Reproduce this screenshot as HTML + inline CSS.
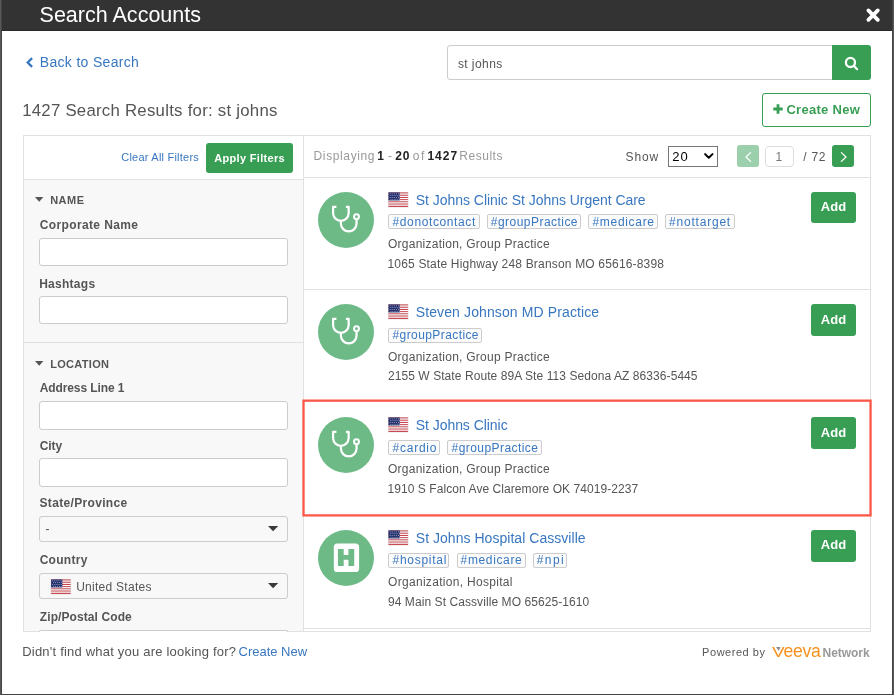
<!DOCTYPE html>
<html lang="en">
<head>
<meta charset="utf-8">
<title>Search Accounts</title>
<style>
html,body{margin:0;padding:0;}
body{width:894px;height:695px;overflow:hidden;background:#585858;font-family:"Liberation Sans",sans-serif;position:relative;}
.abs,.t,.tag,.inp,.sel,.btn,.line{position:absolute;box-sizing:border-box;}
.t{white-space:nowrap;display:block;}
#wrap{position:absolute;left:0;top:0;width:894px;height:695px;will-change:transform;}
#modal{position:absolute;left:2px;top:0;width:890px;height:694px;background:#fff;box-shadow:0 0 0 1px #444;}
#hdr{position:absolute;left:2px;top:0;width:890px;height:31px;background:#333;box-sizing:border-box;border-bottom:1px solid #2a2a2a;}
.inp{background:#fff;border:1px solid #ccc;border-radius:3px;}
.sel{background:#f8f8f8;border:1px solid #ccc;border-radius:3px;}
.btn{background:#389e54;border-radius:3px;}
.tag{height:15px;border:1px solid #ccc;border-radius:2px;background:#fbfbfb;}
.line{background:#e1e1e1;}
.circ{position:absolute;width:56px;height:56px;border-radius:50%;background:#6eba87;}
svg{position:absolute;overflow:visible;}
</style>
</head>
<body>
<div id="wrap">
<div id="modal"></div>
<div id="hdr"></div>
<!-- close icon -->
<svg style="left:866px;top:8px" width="14" height="14" viewBox="0 0 14 14"><path d="M2.4 2.4 L11.8 11.8 M11.8 2.4 L2.4 11.8" stroke="#fff" stroke-width="3.8" stroke-linecap="round" fill="none"/></svg>
<!-- back chevron -->
<svg style="left:26px;top:57px" width="7" height="11" viewBox="0 0 7 11"><path d="M5.3 1.9 L1.7 5.5 L5.3 9.1" stroke="#3877c0" stroke-width="2.3" fill="none" stroke-linecap="square" stroke-linejoin="miter"/></svg>

<!-- search input + button -->
<div class="inp" style="left:447px;top:45px;width:386px;height:35px;border-radius:3px 0 0 3px;"></div>
<div class="btn" style="left:832px;top:45px;width:39px;height:35px;border-radius:0 3px 3px 0;"></div>
<svg style="left:844px;top:56px" width="15" height="15" viewBox="0 0 15 15"><circle cx="6.45" cy="6.45" r="4.55" stroke="#fff" stroke-width="2.3" fill="none"/><path d="M9.8 9.8 L13.1 13.2" stroke="#fff" stroke-width="2.2" stroke-linecap="round"/></svg>

<!-- create new -->
<div class="abs" style="left:762px;top:93px;width:109px;height:34px;border:1px solid #389e54;border-radius:3px;background:#fff;"></div>
<svg style="left:773px;top:104px" width="10" height="10" viewBox="0 0 10 10"><path d="M5 0.3 V9.7 M0.3 5 H9.7" stroke="#389e54" stroke-width="2.8"/></svg>

<!-- main panel -->
<div class="abs" style="left:23px;top:135px;width:848px;height:497px;border:1px solid #e1e1e1;background:#fff;"></div>
<!-- filter panel bg -->
<div class="abs" style="left:24px;top:180px;width:279px;height:451px;background:#f8f8f8;"></div>
<div class="line" style="left:24px;top:179px;width:279px;height:1px;"></div>
<div class="line" style="left:303px;top:136px;width:1px;height:495px;"></div>
<div class="line" style="left:304px;top:177px;width:566px;height:1px;"></div>
<div class="line" style="left:24px;top:342px;width:279px;height:1px;"></div>
<!-- row separators -->
<div class="line" style="left:304px;top:289px;width:566px;height:1px;"></div>
<div class="line" style="left:304px;top:628px;width:566px;height:1px;"></div>
<!-- selected row red outline -->
<svg style="left:0;top:0" width="894" height="695" viewBox="0 0 894 695"><rect x="303.5" y="400.65" width="567.05" height="114.75" fill="none" stroke="#fd5748" stroke-width="2.3"/></svg>

<!-- apply filters btn -->
<div class="btn" style="left:206px;top:143px;width:87px;height:30px;"></div>

<!-- pagination -->
<div class="abs" style="left:668px;top:146px;width:50px;height:21px;border:1px solid #767676;background:#fff;"></div>
<svg style="left:704.2px;top:153.2px" width="9.6" height="6" viewBox="0 0 9.6 6"><path d="M1.1 1.1 L4.8 4.7 L8.5 1.1" stroke="#000" stroke-width="2" fill="none" stroke-linecap="round" stroke-linejoin="round"/></svg>
<div class="btn" style="left:737px;top:145px;width:22px;height:22px;background:#9ccfab;"></div>
<svg style="left:744.6px;top:151.5px" width="7" height="10" viewBox="0 0 7 10"><path d="M5.6 0.6 L1 5 L5.6 9.4" stroke="#fff" stroke-width="1.3" fill="none" stroke-linecap="round" stroke-linejoin="round"/></svg>
<div class="inp" style="left:765px;top:146px;width:29px;height:21px;border-color:#ddd;border-radius:4px;"></div>
<div class="btn" style="left:832px;top:145px;width:22px;height:22px;"></div>
<svg style="left:839.8px;top:151.5px" width="7" height="10" viewBox="0 0 7 10"><path d="M1.4 0.6 L6 5 L1.4 9.4" stroke="#fff" stroke-width="1.3" fill="none" stroke-linecap="round" stroke-linejoin="round"/></svg>

<!-- filter section carets -->
<svg style="left:34.8px;top:196.8px" width="8.4" height="5" viewBox="0 0 8.4 5"><path d="M0 0 H8.4 L4.2 4.7 Z" fill="#555"/></svg>
<svg style="left:34.8px;top:360.8px" width="8.4" height="5" viewBox="0 0 8.4 5"><path d="M0 0 H8.4 L4.2 4.7 Z" fill="#555"/></svg>

<!-- filter inputs -->
<div class="inp" style="left:39px;top:238px;width:249px;height:28px;"></div>
<div class="inp" style="left:39px;top:296px;width:249px;height:28px;"></div>
<div class="inp" style="left:39px;top:401px;width:249px;height:29px;"></div>
<div class="inp" style="left:39px;top:458px;width:249px;height:29px;"></div>
<div class="sel" style="left:39px;top:516px;width:249px;height:26px;"></div>
<div class="sel" style="left:39px;top:573px;width:249px;height:26px;"></div>
<div class="inp" style="left:39px;top:630px;width:249px;height:2px;border-bottom:0;border-radius:3px 3px 0 0;"></div>
<svg style="left:267.5px;top:526px" width="11" height="6" viewBox="0 0 11 6"><path d="M0 0 H10.2 L5.1 5.2 Z" fill="#3a3a3a"/></svg>
<svg style="left:267.5px;top:583.2px" width="11" height="6" viewBox="0 0 11 6"><path d="M0 0 H10.2 L5.1 5.2 Z" fill="#3a3a3a"/></svg>

<div class="tag" style="left:388.4px;top:214px;width:91.3px"></div>
<div class="tag" style="left:486.7px;top:214px;width:94.6px"></div>
<div class="tag" style="left:588.4px;top:214px;width:69.5px"></div>
<div class="tag" style="left:665.0px;top:214px;width:69.5px"></div>
<div class="tag" style="left:388.4px;top:328px;width:93.9px"></div>
<div class="tag" style="left:388.4px;top:440px;width:52.0px"></div>
<div class="tag" style="left:447.4px;top:440px;width:94.3px"></div>
<div class="tag" style="left:388.4px;top:553px;width:61.1px"></div>
<div class="tag" style="left:456.5px;top:553px;width:69.1px"></div>
<div class="tag" style="left:532.7px;top:553px;width:34.5px"></div>
<div class="circ" style="left:318px;top:192.0px"></div>
<svg style="left:318px;top:192.0px" width="56" height="56" viewBox="318 192 56 56"><g fill="none" stroke="#fff" stroke-width="2.2" stroke-linejoin="round"><path d="M336.4 206.9 H333.1 V213.3 A7.78 7.8 0 0 0 348.65 213.3 V206.9 H345.9"/><path d="M340.9 221.1 V223.6 A7.83 7.83 0 0 0 356.56 223.6 V219.4"/><circle cx="356.5" cy="216.75" r="2.45" stroke-width="2"/></g></svg>
<svg style="left:388.20px;top:192.25px" width="20.4" height="15.4" viewBox="0 0 20.4 15.4"><rect x="0" y="0" width="20.4" height="15.4" fill="#dcdcd8"/><rect x="0.5" y="0.50" width="19.4" height="1.16" fill="#c22f3c"/><rect x="0.5" y="1.61" width="19.4" height="1.16" fill="#fff"/><rect x="0.5" y="2.72" width="19.4" height="1.16" fill="#c22f3c"/><rect x="0.5" y="3.82" width="19.4" height="1.16" fill="#fff"/><rect x="0.5" y="4.93" width="19.4" height="1.16" fill="#c22f3c"/><rect x="0.5" y="6.04" width="19.4" height="1.16" fill="#fff"/><rect x="0.5" y="7.15" width="19.4" height="1.16" fill="#c22f3c"/><rect x="0.5" y="8.25" width="19.4" height="1.16" fill="#fff"/><rect x="0.5" y="9.36" width="19.4" height="1.16" fill="#c22f3c"/><rect x="0.5" y="10.47" width="19.4" height="1.16" fill="#fff"/><rect x="0.5" y="11.58" width="19.4" height="1.16" fill="#c22f3c"/><rect x="0.5" y="12.68" width="19.4" height="1.16" fill="#fff"/><rect x="0.5" y="13.79" width="19.4" height="1.16" fill="#c22f3c"/><rect x="0.5" y="0.5" width="19.4" height="14.4" fill="#fff" opacity="0.10"/><rect x="0.5" y="0.5" width="11.2" height="7.9" fill="#1f2d6b"/><rect x="1.6" y="1.5" width="0.9" height="0.8" fill="#c9cde0"/><rect x="3.7" y="1.5" width="0.9" height="0.8" fill="#c9cde0"/><rect x="5.8" y="1.5" width="0.9" height="0.8" fill="#c9cde0"/><rect x="7.9" y="1.5" width="0.9" height="0.8" fill="#c9cde0"/><rect x="10.0" y="1.5" width="0.9" height="0.8" fill="#c9cde0"/><rect x="2.4" y="3.3" width="0.9" height="0.8" fill="#c9cde0"/><rect x="4.5" y="3.3" width="0.9" height="0.8" fill="#c9cde0"/><rect x="6.6" y="3.3" width="0.9" height="0.8" fill="#c9cde0"/><rect x="8.7" y="3.3" width="0.9" height="0.8" fill="#c9cde0"/><rect x="10.8" y="3.3" width="0.9" height="0.8" fill="#c9cde0"/><rect x="1.6" y="5.1" width="0.9" height="0.8" fill="#c9cde0"/><rect x="3.7" y="5.1" width="0.9" height="0.8" fill="#c9cde0"/><rect x="5.8" y="5.1" width="0.9" height="0.8" fill="#c9cde0"/><rect x="7.9" y="5.1" width="0.9" height="0.8" fill="#c9cde0"/><rect x="10.0" y="5.1" width="0.9" height="0.8" fill="#c9cde0"/><rect x="2.4" y="6.9" width="0.9" height="0.8" fill="#c9cde0"/><rect x="4.5" y="6.9" width="0.9" height="0.8" fill="#c9cde0"/><rect x="6.6" y="6.9" width="0.9" height="0.8" fill="#c9cde0"/><rect x="8.7" y="6.9" width="0.9" height="0.8" fill="#c9cde0"/><rect x="10.8" y="6.9" width="0.9" height="0.8" fill="#c9cde0"/></svg>
<div class="btn" style="left:811px;top:192px;width:45px;height:31px"></div>
<div class="circ" style="left:318px;top:304.0px"></div>
<svg style="left:318px;top:304.0px" width="56" height="56" viewBox="318 192 56 56"><g fill="none" stroke="#fff" stroke-width="2.2" stroke-linejoin="round"><path d="M336.4 206.9 H333.1 V213.3 A7.78 7.8 0 0 0 348.65 213.3 V206.9 H345.9"/><path d="M340.9 221.1 V223.6 A7.83 7.83 0 0 0 356.56 223.6 V219.4"/><circle cx="356.5" cy="216.75" r="2.45" stroke-width="2"/></g></svg>
<svg style="left:388.20px;top:304.25px" width="20.4" height="15.4" viewBox="0 0 20.4 15.4"><rect x="0" y="0" width="20.4" height="15.4" fill="#dcdcd8"/><rect x="0.5" y="0.50" width="19.4" height="1.16" fill="#c22f3c"/><rect x="0.5" y="1.61" width="19.4" height="1.16" fill="#fff"/><rect x="0.5" y="2.72" width="19.4" height="1.16" fill="#c22f3c"/><rect x="0.5" y="3.82" width="19.4" height="1.16" fill="#fff"/><rect x="0.5" y="4.93" width="19.4" height="1.16" fill="#c22f3c"/><rect x="0.5" y="6.04" width="19.4" height="1.16" fill="#fff"/><rect x="0.5" y="7.15" width="19.4" height="1.16" fill="#c22f3c"/><rect x="0.5" y="8.25" width="19.4" height="1.16" fill="#fff"/><rect x="0.5" y="9.36" width="19.4" height="1.16" fill="#c22f3c"/><rect x="0.5" y="10.47" width="19.4" height="1.16" fill="#fff"/><rect x="0.5" y="11.58" width="19.4" height="1.16" fill="#c22f3c"/><rect x="0.5" y="12.68" width="19.4" height="1.16" fill="#fff"/><rect x="0.5" y="13.79" width="19.4" height="1.16" fill="#c22f3c"/><rect x="0.5" y="0.5" width="19.4" height="14.4" fill="#fff" opacity="0.10"/><rect x="0.5" y="0.5" width="11.2" height="7.9" fill="#1f2d6b"/><rect x="1.6" y="1.5" width="0.9" height="0.8" fill="#c9cde0"/><rect x="3.7" y="1.5" width="0.9" height="0.8" fill="#c9cde0"/><rect x="5.8" y="1.5" width="0.9" height="0.8" fill="#c9cde0"/><rect x="7.9" y="1.5" width="0.9" height="0.8" fill="#c9cde0"/><rect x="10.0" y="1.5" width="0.9" height="0.8" fill="#c9cde0"/><rect x="2.4" y="3.3" width="0.9" height="0.8" fill="#c9cde0"/><rect x="4.5" y="3.3" width="0.9" height="0.8" fill="#c9cde0"/><rect x="6.6" y="3.3" width="0.9" height="0.8" fill="#c9cde0"/><rect x="8.7" y="3.3" width="0.9" height="0.8" fill="#c9cde0"/><rect x="10.8" y="3.3" width="0.9" height="0.8" fill="#c9cde0"/><rect x="1.6" y="5.1" width="0.9" height="0.8" fill="#c9cde0"/><rect x="3.7" y="5.1" width="0.9" height="0.8" fill="#c9cde0"/><rect x="5.8" y="5.1" width="0.9" height="0.8" fill="#c9cde0"/><rect x="7.9" y="5.1" width="0.9" height="0.8" fill="#c9cde0"/><rect x="10.0" y="5.1" width="0.9" height="0.8" fill="#c9cde0"/><rect x="2.4" y="6.9" width="0.9" height="0.8" fill="#c9cde0"/><rect x="4.5" y="6.9" width="0.9" height="0.8" fill="#c9cde0"/><rect x="6.6" y="6.9" width="0.9" height="0.8" fill="#c9cde0"/><rect x="8.7" y="6.9" width="0.9" height="0.8" fill="#c9cde0"/><rect x="10.8" y="6.9" width="0.9" height="0.8" fill="#c9cde0"/></svg>
<div class="btn" style="left:811px;top:304px;width:45px;height:32px"></div>
<div class="circ" style="left:318px;top:417.0px"></div>
<svg style="left:318px;top:417.0px" width="56" height="56" viewBox="318 192 56 56"><g fill="none" stroke="#fff" stroke-width="2.2" stroke-linejoin="round"><path d="M336.4 206.9 H333.1 V213.3 A7.78 7.8 0 0 0 348.65 213.3 V206.9 H345.9"/><path d="M340.9 221.1 V223.6 A7.83 7.83 0 0 0 356.56 223.6 V219.4"/><circle cx="356.5" cy="216.75" r="2.45" stroke-width="2"/></g></svg>
<svg style="left:388.20px;top:417.25px" width="20.4" height="15.4" viewBox="0 0 20.4 15.4"><rect x="0" y="0" width="20.4" height="15.4" fill="#dcdcd8"/><rect x="0.5" y="0.50" width="19.4" height="1.16" fill="#c22f3c"/><rect x="0.5" y="1.61" width="19.4" height="1.16" fill="#fff"/><rect x="0.5" y="2.72" width="19.4" height="1.16" fill="#c22f3c"/><rect x="0.5" y="3.82" width="19.4" height="1.16" fill="#fff"/><rect x="0.5" y="4.93" width="19.4" height="1.16" fill="#c22f3c"/><rect x="0.5" y="6.04" width="19.4" height="1.16" fill="#fff"/><rect x="0.5" y="7.15" width="19.4" height="1.16" fill="#c22f3c"/><rect x="0.5" y="8.25" width="19.4" height="1.16" fill="#fff"/><rect x="0.5" y="9.36" width="19.4" height="1.16" fill="#c22f3c"/><rect x="0.5" y="10.47" width="19.4" height="1.16" fill="#fff"/><rect x="0.5" y="11.58" width="19.4" height="1.16" fill="#c22f3c"/><rect x="0.5" y="12.68" width="19.4" height="1.16" fill="#fff"/><rect x="0.5" y="13.79" width="19.4" height="1.16" fill="#c22f3c"/><rect x="0.5" y="0.5" width="19.4" height="14.4" fill="#fff" opacity="0.10"/><rect x="0.5" y="0.5" width="11.2" height="7.9" fill="#1f2d6b"/><rect x="1.6" y="1.5" width="0.9" height="0.8" fill="#c9cde0"/><rect x="3.7" y="1.5" width="0.9" height="0.8" fill="#c9cde0"/><rect x="5.8" y="1.5" width="0.9" height="0.8" fill="#c9cde0"/><rect x="7.9" y="1.5" width="0.9" height="0.8" fill="#c9cde0"/><rect x="10.0" y="1.5" width="0.9" height="0.8" fill="#c9cde0"/><rect x="2.4" y="3.3" width="0.9" height="0.8" fill="#c9cde0"/><rect x="4.5" y="3.3" width="0.9" height="0.8" fill="#c9cde0"/><rect x="6.6" y="3.3" width="0.9" height="0.8" fill="#c9cde0"/><rect x="8.7" y="3.3" width="0.9" height="0.8" fill="#c9cde0"/><rect x="10.8" y="3.3" width="0.9" height="0.8" fill="#c9cde0"/><rect x="1.6" y="5.1" width="0.9" height="0.8" fill="#c9cde0"/><rect x="3.7" y="5.1" width="0.9" height="0.8" fill="#c9cde0"/><rect x="5.8" y="5.1" width="0.9" height="0.8" fill="#c9cde0"/><rect x="7.9" y="5.1" width="0.9" height="0.8" fill="#c9cde0"/><rect x="10.0" y="5.1" width="0.9" height="0.8" fill="#c9cde0"/><rect x="2.4" y="6.9" width="0.9" height="0.8" fill="#c9cde0"/><rect x="4.5" y="6.9" width="0.9" height="0.8" fill="#c9cde0"/><rect x="6.6" y="6.9" width="0.9" height="0.8" fill="#c9cde0"/><rect x="8.7" y="6.9" width="0.9" height="0.8" fill="#c9cde0"/><rect x="10.8" y="6.9" width="0.9" height="0.8" fill="#c9cde0"/></svg>
<div class="btn" style="left:811px;top:417px;width:45px;height:32px"></div>
<div class="circ" style="left:318px;top:530.0px"></div>
<svg style="left:0;top:0" width="894" height="695" viewBox="0 0 894 695"><rect x="333.8" y="543.6" width="25.3" height="28.4" rx="3.6" fill="#fff"/></svg>
<span class="t" style="left:326.25px;top:539.5px;width:40px;height:36px;line-height:36px;text-align:center;font-size:22.6px;font-weight:700;color:#6eba87;-webkit-text-stroke:2.2px #6eba87;transform:scaleX(1.05);transform-origin:50% 50%">H</span>
<svg style="left:388.20px;top:530.25px" width="20.4" height="15.4" viewBox="0 0 20.4 15.4"><rect x="0" y="0" width="20.4" height="15.4" fill="#dcdcd8"/><rect x="0.5" y="0.50" width="19.4" height="1.16" fill="#c22f3c"/><rect x="0.5" y="1.61" width="19.4" height="1.16" fill="#fff"/><rect x="0.5" y="2.72" width="19.4" height="1.16" fill="#c22f3c"/><rect x="0.5" y="3.82" width="19.4" height="1.16" fill="#fff"/><rect x="0.5" y="4.93" width="19.4" height="1.16" fill="#c22f3c"/><rect x="0.5" y="6.04" width="19.4" height="1.16" fill="#fff"/><rect x="0.5" y="7.15" width="19.4" height="1.16" fill="#c22f3c"/><rect x="0.5" y="8.25" width="19.4" height="1.16" fill="#fff"/><rect x="0.5" y="9.36" width="19.4" height="1.16" fill="#c22f3c"/><rect x="0.5" y="10.47" width="19.4" height="1.16" fill="#fff"/><rect x="0.5" y="11.58" width="19.4" height="1.16" fill="#c22f3c"/><rect x="0.5" y="12.68" width="19.4" height="1.16" fill="#fff"/><rect x="0.5" y="13.79" width="19.4" height="1.16" fill="#c22f3c"/><rect x="0.5" y="0.5" width="19.4" height="14.4" fill="#fff" opacity="0.10"/><rect x="0.5" y="0.5" width="11.2" height="7.9" fill="#1f2d6b"/><rect x="1.6" y="1.5" width="0.9" height="0.8" fill="#c9cde0"/><rect x="3.7" y="1.5" width="0.9" height="0.8" fill="#c9cde0"/><rect x="5.8" y="1.5" width="0.9" height="0.8" fill="#c9cde0"/><rect x="7.9" y="1.5" width="0.9" height="0.8" fill="#c9cde0"/><rect x="10.0" y="1.5" width="0.9" height="0.8" fill="#c9cde0"/><rect x="2.4" y="3.3" width="0.9" height="0.8" fill="#c9cde0"/><rect x="4.5" y="3.3" width="0.9" height="0.8" fill="#c9cde0"/><rect x="6.6" y="3.3" width="0.9" height="0.8" fill="#c9cde0"/><rect x="8.7" y="3.3" width="0.9" height="0.8" fill="#c9cde0"/><rect x="10.8" y="3.3" width="0.9" height="0.8" fill="#c9cde0"/><rect x="1.6" y="5.1" width="0.9" height="0.8" fill="#c9cde0"/><rect x="3.7" y="5.1" width="0.9" height="0.8" fill="#c9cde0"/><rect x="5.8" y="5.1" width="0.9" height="0.8" fill="#c9cde0"/><rect x="7.9" y="5.1" width="0.9" height="0.8" fill="#c9cde0"/><rect x="10.0" y="5.1" width="0.9" height="0.8" fill="#c9cde0"/><rect x="2.4" y="6.9" width="0.9" height="0.8" fill="#c9cde0"/><rect x="4.5" y="6.9" width="0.9" height="0.8" fill="#c9cde0"/><rect x="6.6" y="6.9" width="0.9" height="0.8" fill="#c9cde0"/><rect x="8.7" y="6.9" width="0.9" height="0.8" fill="#c9cde0"/><rect x="10.8" y="6.9" width="0.9" height="0.8" fill="#c9cde0"/></svg>
<div class="btn" style="left:811px;top:530px;width:45px;height:32px"></div>
<svg style="left:50.30px;top:579.20px" width="21.7" height="15.4" viewBox="0 0 20.4 15.4"><rect x="0" y="0" width="20.4" height="15.4" fill="#dcdcd8"/><rect x="0.5" y="0.50" width="19.4" height="1.16" fill="#c22f3c"/><rect x="0.5" y="1.61" width="19.4" height="1.16" fill="#fff"/><rect x="0.5" y="2.72" width="19.4" height="1.16" fill="#c22f3c"/><rect x="0.5" y="3.82" width="19.4" height="1.16" fill="#fff"/><rect x="0.5" y="4.93" width="19.4" height="1.16" fill="#c22f3c"/><rect x="0.5" y="6.04" width="19.4" height="1.16" fill="#fff"/><rect x="0.5" y="7.15" width="19.4" height="1.16" fill="#c22f3c"/><rect x="0.5" y="8.25" width="19.4" height="1.16" fill="#fff"/><rect x="0.5" y="9.36" width="19.4" height="1.16" fill="#c22f3c"/><rect x="0.5" y="10.47" width="19.4" height="1.16" fill="#fff"/><rect x="0.5" y="11.58" width="19.4" height="1.16" fill="#c22f3c"/><rect x="0.5" y="12.68" width="19.4" height="1.16" fill="#fff"/><rect x="0.5" y="13.79" width="19.4" height="1.16" fill="#c22f3c"/><rect x="0.5" y="0.5" width="19.4" height="14.4" fill="#fff" opacity="0.10"/><rect x="0.5" y="0.5" width="11.2" height="7.9" fill="#1f2d6b"/><rect x="1.6" y="1.5" width="0.9" height="0.8" fill="#c9cde0"/><rect x="3.7" y="1.5" width="0.9" height="0.8" fill="#c9cde0"/><rect x="5.8" y="1.5" width="0.9" height="0.8" fill="#c9cde0"/><rect x="7.9" y="1.5" width="0.9" height="0.8" fill="#c9cde0"/><rect x="10.0" y="1.5" width="0.9" height="0.8" fill="#c9cde0"/><rect x="2.4" y="3.3" width="0.9" height="0.8" fill="#c9cde0"/><rect x="4.5" y="3.3" width="0.9" height="0.8" fill="#c9cde0"/><rect x="6.6" y="3.3" width="0.9" height="0.8" fill="#c9cde0"/><rect x="8.7" y="3.3" width="0.9" height="0.8" fill="#c9cde0"/><rect x="10.8" y="3.3" width="0.9" height="0.8" fill="#c9cde0"/><rect x="1.6" y="5.1" width="0.9" height="0.8" fill="#c9cde0"/><rect x="3.7" y="5.1" width="0.9" height="0.8" fill="#c9cde0"/><rect x="5.8" y="5.1" width="0.9" height="0.8" fill="#c9cde0"/><rect x="7.9" y="5.1" width="0.9" height="0.8" fill="#c9cde0"/><rect x="10.0" y="5.1" width="0.9" height="0.8" fill="#c9cde0"/><rect x="2.4" y="6.9" width="0.9" height="0.8" fill="#c9cde0"/><rect x="4.5" y="6.9" width="0.9" height="0.8" fill="#c9cde0"/><rect x="6.6" y="6.9" width="0.9" height="0.8" fill="#c9cde0"/><rect x="8.7" y="6.9" width="0.9" height="0.8" fill="#c9cde0"/><rect x="10.8" y="6.9" width="0.9" height="0.8" fill="#c9cde0"/></svg>
<span class="t" style="left:772.2px;top:638px;height:26px;line-height:26px;font-size:17.6px;color:#f6921e;letter-spacing:-0.25px"><span style="display:inline-block;font-size:14px;line-height:26px;letter-spacing:0;width:11.2px;transform:scaleX(1.36);transform-origin:0 50%">V</span>eeva</span>
<svg style="left:775.6px;top:647px" width="4.4" height="4" viewBox="0 0 4.4 4"><path d="M0 0 H4.4 L2.9 4 Z" fill="#8c8c8c"/></svg>
<span class="t" style="left:39.56px;top:1.00px;font-size:21.5px;line-height:28px;font-weight:400;color:#fff;letter-spacing:0.009px;">Search Accounts</span>
<span class="t" style="left:39.75px;top:53.00px;font-size:14px;line-height:18px;font-weight:400;color:#3877c0;letter-spacing:0.323px;">Back to Search</span>
<span class="t" style="left:457.89px;top:56.00px;font-size:12px;line-height:16px;font-weight:400;color:#555;letter-spacing:0.439px;">st johns</span>
<span class="t" style="left:22.15px;top:100.00px;font-size:16.8px;line-height:22px;font-weight:400;color:#555;letter-spacing:0.252px;">1427 Search Results for: st johns</span>
<span class="t" style="left:786.42px;top:101.00px;font-size:13px;line-height:17px;font-weight:700;color:#389e54;letter-spacing:0.288px;">Create New</span>
<span class="t" style="left:121.27px;top:150.00px;font-size:11px;line-height:14px;font-weight:400;color:#3877c0;letter-spacing:0.222px;">Clear All Filters</span>
<span class="t" style="left:214.20px;top:151.00px;font-size:11px;line-height:14px;font-weight:700;color:#fff;letter-spacing:0.323px;">Apply Filters</span>
<span class="t" style="left:313.58px;top:148.00px;font-size:12px;line-height:16px;font-weight:400;color:#999;letter-spacing:0.617px;">Displaying</span>
<span class="t" style="left:377.21px;top:148.00px;font-size:12px;line-height:16px;font-weight:700;color:#222;letter-spacing:0.000px;">1</span>
<span class="t" style="left:387.90px;top:148.00px;font-size:12px;line-height:16px;font-weight:400;color:#999;letter-spacing:0.000px;">-</span>
<span class="t" style="left:395.13px;top:148.00px;font-size:12px;line-height:16px;font-weight:700;color:#222;letter-spacing:0.980px;">20</span>
<span class="t" style="left:412.82px;top:148.00px;font-size:12px;line-height:16px;font-weight:400;color:#999;letter-spacing:1.435px;">of</span>
<span class="t" style="left:427.46px;top:148.00px;font-size:12px;line-height:16px;font-weight:700;color:#222;letter-spacing:0.985px;">1427</span>
<span class="t" style="left:459.28px;top:148.00px;font-size:12px;line-height:16px;font-weight:400;color:#999;letter-spacing:0.524px;">Results</span>
<span class="t" style="left:625.44px;top:149.00px;font-size:12px;line-height:16px;font-weight:400;color:#555;letter-spacing:0.944px;">Show</span>
<span class="t" style="left:672.22px;top:148.00px;font-size:13px;line-height:17px;font-weight:400;color:#000;letter-spacing:1.071px;">20</span>
<span class="t" style="left:775.53px;top:149.00px;font-size:12px;line-height:16px;font-weight:400;color:#777;letter-spacing:0.000px;">1</span>
<span class="t" style="left:803.29px;top:149.00px;font-size:12px;line-height:16px;font-weight:400;color:#555;letter-spacing:0.729px;">/ 72</span>
<span class="t" style="left:50.17px;top:193.00px;font-size:11px;line-height:14px;font-weight:700;color:#555;letter-spacing:0.482px;">NAME</span>
<span class="t" style="left:39.66px;top:217.00px;font-size:12px;line-height:16px;font-weight:700;color:#555;letter-spacing:0.381px;">Corporate Name</span>
<span class="t" style="left:39.15px;top:276.00px;font-size:12px;line-height:16px;font-weight:700;color:#555;letter-spacing:0.272px;">Hashtags</span>
<span class="t" style="left:50.17px;top:357.00px;font-size:11px;line-height:14px;font-weight:700;color:#555;letter-spacing:0.317px;">LOCATION</span>
<span class="t" style="left:39.70px;top:380.00px;font-size:12px;line-height:16px;font-weight:700;color:#555;letter-spacing:-0.105px;">Address Line 1</span>
<span class="t" style="left:39.66px;top:438.00px;font-size:12px;line-height:16px;font-weight:700;color:#555;letter-spacing:-0.065px;">City</span>
<span class="t" style="left:39.48px;top:495.00px;font-size:12px;line-height:16px;font-weight:700;color:#555;letter-spacing:0.333px;">State/Province</span>
<span class="t" style="left:45.50px;top:521.00px;font-size:12px;line-height:16px;font-weight:400;color:#555;letter-spacing:0.000px;">-</span>
<span class="t" style="left:39.66px;top:552.00px;font-size:12px;line-height:16px;font-weight:700;color:#555;letter-spacing:0.281px;">Country</span>
<span class="t" style="left:76.20px;top:579.00px;font-size:12px;line-height:16px;font-weight:400;color:#555;letter-spacing:0.269px;">United States</span>
<span class="t" style="left:39.79px;top:609.00px;font-size:12px;line-height:16px;font-weight:700;color:#555;letter-spacing:0.092px;">Zip/Postal Code</span>
<span class="t" style="left:22.22px;top:643.00px;font-size:13px;line-height:17px;font-weight:400;color:#555;letter-spacing:0.210px;">Didn&#x27;t find what you are looking for?</span>
<span class="t" style="left:238.51px;top:643.00px;font-size:13px;line-height:17px;font-weight:400;color:#3877c0;letter-spacing:-0.012px;">Create New</span>
<span class="t" style="left:702.11px;top:645.00px;font-size:11px;line-height:14px;font-weight:400;color:#555;letter-spacing:0.531px;">Powered by</span>
<span class="t" style="left:822.55px;top:645.00px;font-size:12px;line-height:16px;font-weight:700;color:#999;letter-spacing:-0.041px;">Network</span>
<span class="t" style="left:415.76px;top:191.00px;font-size:14px;line-height:18px;font-weight:400;color:#3877c0;letter-spacing:-0.035px;">St Johns Clinic St Johns Urgent Care</span>
<span class="t" style="left:392.52px;top:214.00px;font-size:12px;line-height:16px;font-weight:400;color:#3877c0;letter-spacing:0.617px;">#donotcontact</span>
<span class="t" style="left:490.82px;top:214.00px;font-size:12px;line-height:16px;font-weight:400;color:#3877c0;letter-spacing:0.463px;">#groupPractice</span>
<span class="t" style="left:592.52px;top:214.00px;font-size:12px;line-height:16px;font-weight:400;color:#3877c0;letter-spacing:0.680px;">#medicare</span>
<span class="t" style="left:669.12px;top:214.00px;font-size:12px;line-height:16px;font-weight:400;color:#3877c0;letter-spacing:0.782px;">#nottarget</span>
<span class="t" style="left:387.99px;top:236.00px;font-size:12px;line-height:16px;font-weight:400;color:#555;letter-spacing:0.254px;">Organization, Group Practice</span>
<span class="t" style="left:387.51px;top:256.00px;font-size:12px;line-height:16px;font-weight:400;color:#555;letter-spacing:0.178px;">1065 State Highway 248 Branson MO 65616-8398</span>
<span class="t" style="left:820.67px;top:198.00px;font-size:13px;line-height:17px;font-weight:700;color:#fff;letter-spacing:0.169px;">Add</span>
<span class="t" style="left:415.76px;top:303.00px;font-size:14px;line-height:18px;font-weight:400;color:#3877c0;letter-spacing:0.115px;">Steven Johnson MD Practice</span>
<span class="t" style="left:392.52px;top:327.00px;font-size:12px;line-height:16px;font-weight:400;color:#3877c0;letter-spacing:0.409px;">#groupPractice</span>
<span class="t" style="left:387.99px;top:349.00px;font-size:12px;line-height:16px;font-weight:400;color:#555;letter-spacing:0.254px;">Organization, Group Practice</span>
<span class="t" style="left:387.95px;top:368.00px;font-size:12px;line-height:16px;font-weight:400;color:#555;letter-spacing:0.072px;">2155 W State Route 89A Ste 113 Sedona AZ 86336-5445</span>
<span class="t" style="left:820.67px;top:311.00px;font-size:13px;line-height:17px;font-weight:700;color:#fff;letter-spacing:0.169px;">Add</span>
<span class="t" style="left:415.76px;top:416.00px;font-size:14px;line-height:18px;font-weight:400;color:#3877c0;letter-spacing:-0.051px;">St Johns Clinic</span>
<span class="t" style="left:392.52px;top:440.00px;font-size:12px;line-height:16px;font-weight:400;color:#3877c0;letter-spacing:0.765px;">#cardio</span>
<span class="t" style="left:451.52px;top:440.00px;font-size:12px;line-height:16px;font-weight:400;color:#3877c0;letter-spacing:0.440px;">#groupPractice</span>
<span class="t" style="left:387.99px;top:461.00px;font-size:12px;line-height:16px;font-weight:400;color:#555;letter-spacing:0.254px;">Organization, Group Practice</span>
<span class="t" style="left:387.51px;top:481.00px;font-size:12px;line-height:16px;font-weight:400;color:#555;letter-spacing:0.069px;">1910 S Falcon Ave Claremore OK 74019-2237</span>
<span class="t" style="left:820.67px;top:424.00px;font-size:13px;line-height:17px;font-weight:700;color:#fff;letter-spacing:0.169px;">Add</span>
<span class="t" style="left:415.76px;top:529.00px;font-size:14px;line-height:18px;font-weight:400;color:#3877c0;letter-spacing:0.038px;">St Johns Hospital Cassville</span>
<span class="t" style="left:392.52px;top:552.00px;font-size:12px;line-height:16px;font-weight:400;color:#3877c0;letter-spacing:0.718px;">#hospital</span>
<span class="t" style="left:460.62px;top:552.00px;font-size:12px;line-height:16px;font-weight:400;color:#3877c0;letter-spacing:0.630px;">#medicare</span>
<span class="t" style="left:536.82px;top:552.00px;font-size:12px;line-height:16px;font-weight:400;color:#3877c0;letter-spacing:1.373px;">#npi</span>
<span class="t" style="left:387.99px;top:574.00px;font-size:12px;line-height:16px;font-weight:400;color:#555;letter-spacing:0.308px;">Organization, Hospital</span>
<span class="t" style="left:387.94px;top:594.00px;font-size:12px;line-height:16px;font-weight:400;color:#555;letter-spacing:0.075px;">94 Main St Cassville MO 65625-1610</span>
<span class="t" style="left:820.67px;top:536.00px;font-size:13px;line-height:17px;font-weight:700;color:#fff;letter-spacing:0.169px;">Add</span>
</div>
</body>
</html>
